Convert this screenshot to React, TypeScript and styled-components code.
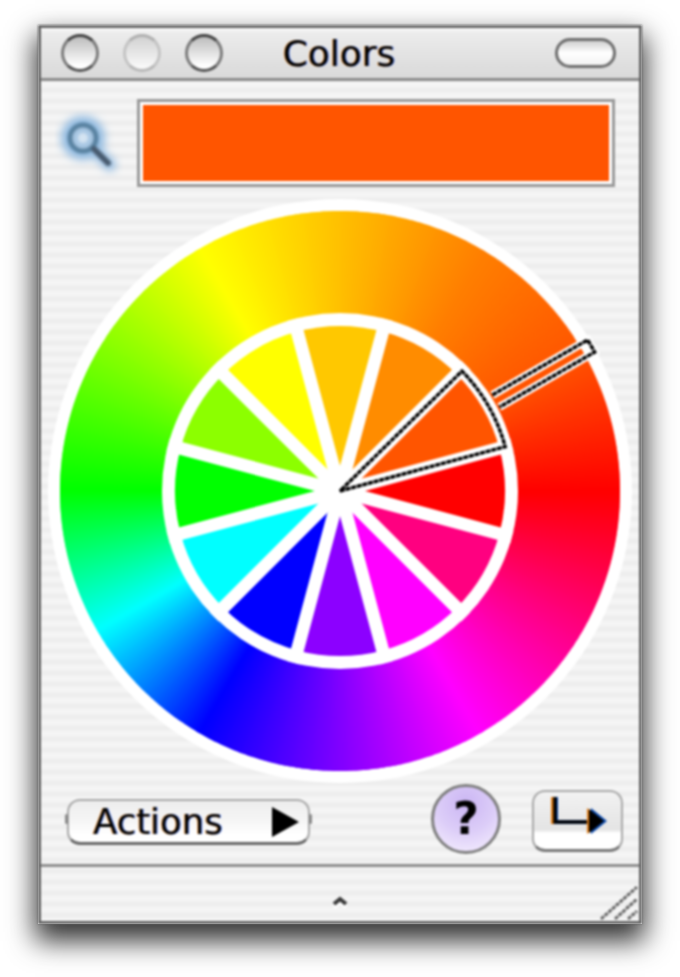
import React from "react";
import styled, { createGlobalStyle } from "styled-components";

const Global = createGlobalStyle`
  html, body { margin: 0; padding: 0; background: #fff; }
  body { font-family: "DejaVu Sans", "Liberation Sans", sans-serif; }
`;

const Page = styled.div`
  width: 680px;
  height: 977px;
  padding: 25px 0 0 38px;
  box-sizing: border-box;
  overflow: hidden;
  background: #fff;
`;

const Shadowed = styled.div`
  width: 604px;
  height: 899px;
  box-shadow: 0 14px 26px 3px rgba(0, 0, 0, 0.8);
`;

const Window = styled.div`
  width: 100%;
  height: 100%;
  box-sizing: border-box;
  border: 3px solid #656565;
  display: flex;
  flex-direction: column;
  filter: blur(0.9px);
  background: repeating-linear-gradient(
    180deg,
    #f5f5f5 0,
    #f5f5f5 3px,
    #ededed 6px,
    #ededed 8px,
    #f5f5f5 11px
  );
`;

const TitleBar = styled.div`
  height: 53px;
  box-sizing: border-box;
  display: flex;
  align-items: center;
  padding: 1px 23px 2px 20px;
  background: linear-gradient(180deg, #fbfbfb 0, #ececec 10%, #d9d9d9 100%);
  border-bottom: 3px solid #8a8a8a;
`;

const Lights = styled.div`
  display: flex;
  gap: 24px;
`;

const Light = styled.div<{ $dim?: boolean }>`
  width: 38px;
  height: 38px;
  box-sizing: border-box;
  border-radius: 50%;
  border: 3px solid;
  border-color: ${(p) => (p.$dim ? "#b0b0b0 #c4c4c4 #b8b8b8" : "#444 #7c7c7c #555")};
  background: ${(p) =>
    p.$dim
      ? "linear-gradient(180deg, #d2d2d2 0, #e6e6e6 50%, #f8f8f8 92%)"
      : "linear-gradient(180deg, #bdbdbd 0, #e0e0e0 48%, #ffffff 90%)"};
`;

const Title = styled.div`
  flex: 1;
  text-align: center;
  font-size: 36px;
  line-height: 44px;
  color: #000;
  padding-right: 100px;
  padding-top: 2px;
  text-shadow: -1px 0 rgba(255, 130, 0, 0.6), 1px 0 rgba(0, 70, 255, 0.6);
`;

const Pill = styled.div`
  width: 61px;
  height: 30px;
  box-sizing: border-box;
  border-radius: 15px;
  border: 3px solid #6e6e6e;
  background: linear-gradient(180deg, #cfcfcf 0, #ffffff 50%, #f2f2f2 100%);
`;

const Body = styled.div`
  flex: 1;
  display: flex;
  flex-direction: column;
  padding: 18px 0 0;
`;

const SwatchRow = styled.div`
  display: flex;
  align-items: center;
  height: 88px;
  padding: 0 24px 0 13px;
`;

const Loupe = styled.svg`
  flex: none;
  width: 83px;
  height: 88px;
`;

const Swatch = styled.div`
  flex: 1;
  box-sizing: border-box;
  height: 88px;
  border: 3px solid #999;
  padding: 3px;
  background: #fff;
`;

const SwatchFill = styled.div`
  height: 100%;
  background: #ff5500;
`;

const Wheel = styled.svg`
  display: block;
  width: 584px;
  height: 584px;
  margin: 12px auto 0;
`;

const BottomRow = styled.div`
  display: flex;
  align-items: center;
  height: 62px;
  margin-top: 7px;
  padding: 0 16px 0 26px;
`;

const Actions = styled.div`
  position: relative;
  width: 243px;
  height: 46px;
  margin-top: 2px;
  box-sizing: border-box;
  display: flex;
  align-items: center;
  justify-content: space-between;
  padding: 0 8px 0 24px;
  border: 2px solid #a8a8a8;
  border-bottom: 3px solid #666;
  border-radius: 13px;
  background: linear-gradient(180deg, #ededed 0, #f6f6f6 50%, #ffffff 82%);
  font-size: 35.5px;
  line-height: 40px;
  color: #000;
  text-shadow: -1px 0 rgba(255, 130, 0, 0.6), 1px 0 rgba(0, 70, 255, 0.6);

  &::before,
  &::after {
    content: "";
    position: absolute;
    top: 13px;
    width: 3px;
    height: 10px;
    background: #8a8a8a;
    border-radius: 2px;
  }
  &::before {
    left: -4px;
  }
  &::after {
    right: -4px;
  }
`;

const ArrowSvg = styled.svg`
  width: 30px;
  height: 32px;
  flex: none;
`;

const Help = styled.div`
  width: 70px;
  height: 70px;
  box-sizing: border-box;
  margin-left: auto;
  margin-right: 31px;
  margin-bottom: 5px;
  border-radius: 50%;
  border: 3px solid #808080;
  display: flex;
  align-items: center;
  justify-content: center;
  background: radial-gradient(circle at 50% 25%, #cbb6f3 0, #dccdf8 50%, #f8f2ff 100%);
  font-size: 44px;
  font-weight: 700;
  color: #000;
`;

const Return = styled.div`
  width: 91px;
  height: 62px;
  box-sizing: border-box;
  border: 2px solid #a8a8a8;
  border-bottom: 3px solid #777;
  border-radius: 13px;
  background: linear-gradient(180deg, #f2f2f2 0, #e4e4e4 66%, #ffffff 72%, #ffffff 100%);
`;

const ReturnSvg = styled.svg`
  display: block;
  width: 87px;
  height: 57px;
`;

const Footer = styled.div`
  height: 57px;
  box-sizing: border-box;
  border-top: 3px solid #8d8d8d;
  display: grid;
  grid-template-columns: 1fr auto 1fr;
`;

const Caret = styled.svg`
  grid-column: 2;
  width: 18px;
  height: 16px;
  margin-top: 27px;
`;

const Grip = styled.svg`
  grid-column: 3;
  justify-self: end;
  align-self: end;
  width: 40px;
  height: 36px;
`;

type Stop = [number, [number, number, number]];
// degrees counter-clockwise from east
const stops: Stop[] = [
  [0, [255, 0, 0]],
  [30, [255, 85, 0]],
  [60, [255, 128, 0]],
  [90, [255, 191, 0]],
  [120, [255, 255, 0]],
  [150, [128, 255, 0]],
  [180, [0, 255, 0]],
  [210, [0, 255, 255]],
  [240, [0, 0, 255]],
  [270, [128, 0, 255]],
  [300, [255, 0, 255]],
  [330, [255, 0, 128]],
  [360, [255, 0, 0]],
];

const colorAt = (a: number) => {
  for (let i = 0; i < stops.length - 1; i++) {
    const [a0, c0] = stops[i];
    const [a1, c1] = stops[i + 1];
    if (a >= a0 && a <= a1) {
      const t = (a - a0) / (a1 - a0);
      const mix = (k: number) => Math.round(c0[k] + (c1[k] - c0[k]) * t);
      return `rgb(${mix(0)},${mix(1)},${mix(2)})`;
    }
  }
  return "rgb(255,0,0)";
};

const C = 292;
const pt = (r: number, deg: number) => {
  const a = (deg * Math.PI) / 180;
  return `${(C + r * Math.cos(a)).toFixed(2)} ${(C - r * Math.sin(a)).toFixed(2)}`;
};
const wedge = (r: number, a0: number, a1: number) =>
  `M${C} ${C}L${pt(r, a0)}A${r} ${r} 0 0 0 ${pt(r, a1)}Z`;

const ringSlices = Array.from({ length: 720 }, (_, i) => {
  const a = i / 2;
  return { d: wedge(280, a - 0.15, a + 0.65), fill: colorAt(a + 0.25) };
});

const sectors: { at: number; fill: string }[] = [
  { at: 0, fill: "#ff0000" },
  { at: 30, fill: "#ff5500" },
  { at: 60, fill: "#ff8c00" },
  { at: 90, fill: "#ffc800" },
  { at: 120, fill: "#ffff00" },
  { at: 150, fill: "#8cff00" },
  { at: 180, fill: "#00ff00" },
  { at: 210, fill: "#00ffff" },
  { at: 240, fill: "#0000ff" },
  { at: 270, fill: "#8c00ff" },
  { at: 300, fill: "#ff00ff" },
  { at: 330, fill: "#ff0080" },
];

const selection = `M${C} ${C}L${pt(171, 15)}A171 171 0 0 0 ${pt(171, 44.5)}Z`;
const pointer = (() => {
  const a = (30 * Math.PI) / 180;
  const ux = Math.cos(a), uy = -Math.sin(a);
  const nx = -uy, ny = ux;
  const w = 7;
  const p = (r: number, s: number) =>
    `${(C + ux * r + nx * s).toFixed(2)} ${(C + uy * r + ny * s).toFixed(2)}`;
  return `M${p(180, -w)}L${p(290, -w)}L${p(290, w)}L${p(180, w)}`;
})();

const Frame = ({ d }: { d: string }) => (
  <>
    <path d={d} fill="none" stroke="#fff" strokeWidth={8} strokeLinejoin="miter" strokeMiterlimit={2} />
    <path d={d} fill="none" stroke="#000" strokeWidth={3.4} strokeDasharray="5 0.8" strokeLinejoin="miter" strokeMiterlimit={2} />
  </>
);

export default function App() {
  return (
    <Page>
      <Global />
      <Shadowed>
        <Window>
          <TitleBar>
            <Lights>
              <Light />
              <Light $dim />
              <Light />
            </Lights>
            <Title>Colors</Title>
            <Pill />
          </TitleBar>
          <Body>
            <SwatchRow>
              <Loupe viewBox="0 0 83 88">
                <defs>
                  <filter id="halo" x="-30%" y="-30%" width="160%" height="160%">
                    <feGaussianBlur stdDeviation="4" />
                  </filter>
                  <filter id="soft" x="-30%" y="-30%" width="160%" height="160%">
                    <feGaussianBlur stdDeviation="1.2" />
                  </filter>
                </defs>
                <g filter="url(#halo)" stroke="#8fb9e0" fill="none" strokeLinecap="round">
                  <circle cx="29" cy="39" r="15" strokeWidth="14" />
                  <line x1="42" y1="52" x2="56" y2="66" strokeWidth="12" />
                </g>
                <g filter="url(#soft)">
                  <circle cx="29" cy="39" r="13" fill="#a9c8e4" stroke="#56809f" strokeWidth="5" />
                  <circle cx="29" cy="39" r="5" fill="#d4e4f2" />
                  <line x1="40" y1="50" x2="54" y2="64" stroke="#46596c" strokeWidth="6" strokeLinecap="round" />
                </g>
              </Loupe>
              <Swatch>
                <SwatchFill />
              </Swatch>
            </SwatchRow>
            <Wheel viewBox="0 0 584 584">
              <circle cx={C} cy={C} r={292} fill="#fff" />
              {ringSlices.map((s, i) => (
                <path key={i} d={s.d} fill={s.fill} />
              ))}
              <circle cx={C} cy={C} r={178} fill="#fff" />
              {sectors.map((s) => (
                <path key={s.at} d={wedge(165, s.at - 15, s.at + 15)} fill={s.fill} />
              ))}
              {sectors.map((s) => (
                <line
                  key={s.at}
                  x1={C}
                  y1={C}
                  x2={C + 178 * Math.cos(((s.at + 15) * Math.PI) / 180)}
                  y2={C - 178 * Math.sin(((s.at + 15) * Math.PI) / 180)}
                  stroke="#fff"
                  strokeWidth={13}
                />
              ))}
              <circle cx={C} cy={C} r={20} fill="#fff" />
              <Frame d={pointer} />
              <Frame d={selection} />
            </Wheel>
            <BottomRow>
              <Actions>
                Actions
                <ArrowSvg viewBox="0 0 30 32">
                  <path d="M2 1L29 16L2 31Z" fill="#000" />
                </ArrowSvg>
              </Actions>
              <Help>?</Help>
              <Return>
                <ReturnSvg viewBox="0 0 87 57">
                  <path d="M21 5V30H56" fill="none" stroke="#e07a10" strokeWidth="4" transform="translate(-2 0)" />
                  <path d="M21 5V30H56" fill="none" stroke="#0a4ab0" strokeWidth="4" transform="translate(1 0)" />
                  <path d="M21 5V30H56" fill="none" stroke="#000" strokeWidth="3.5" />
                  <path d="M55 16L71 29L55 42Z" fill="#e07a10" transform="translate(-2 0)" />
                  <path d="M55 16L71 29L55 42Z" fill="#0a4ab0" transform="translate(2 0)" />
                  <path d="M55 17L70 29L55 41Z" fill="#000" />
                </ReturnSvg>
              </Return>
            </BottomRow>
          </Body>
          <Footer>
            <Caret viewBox="0 0 18 16">
              <path d="M3 10L9 5L15 10" fill="none" stroke="#fff" strokeWidth="4" transform="translate(0 3)" />
              <path d="M3 10L9 5L15 10" fill="none" stroke="#3a3a3a" strokeWidth="4" />
            </Caret>
            <Grip viewBox="0 0 40 36">
              <g stroke="#666" strokeWidth="3" strokeDasharray="4 1">
                <line x1="2" y1="34" x2="38" y2="2" />
                <line x1="16" y1="34" x2="38" y2="14" />
                <line x1="29" y1="34" x2="38" y2="26" />
              </g>
            </Grip>
          </Footer>
        </Window>
      </Shadowed>
    </Page>
  );
}
